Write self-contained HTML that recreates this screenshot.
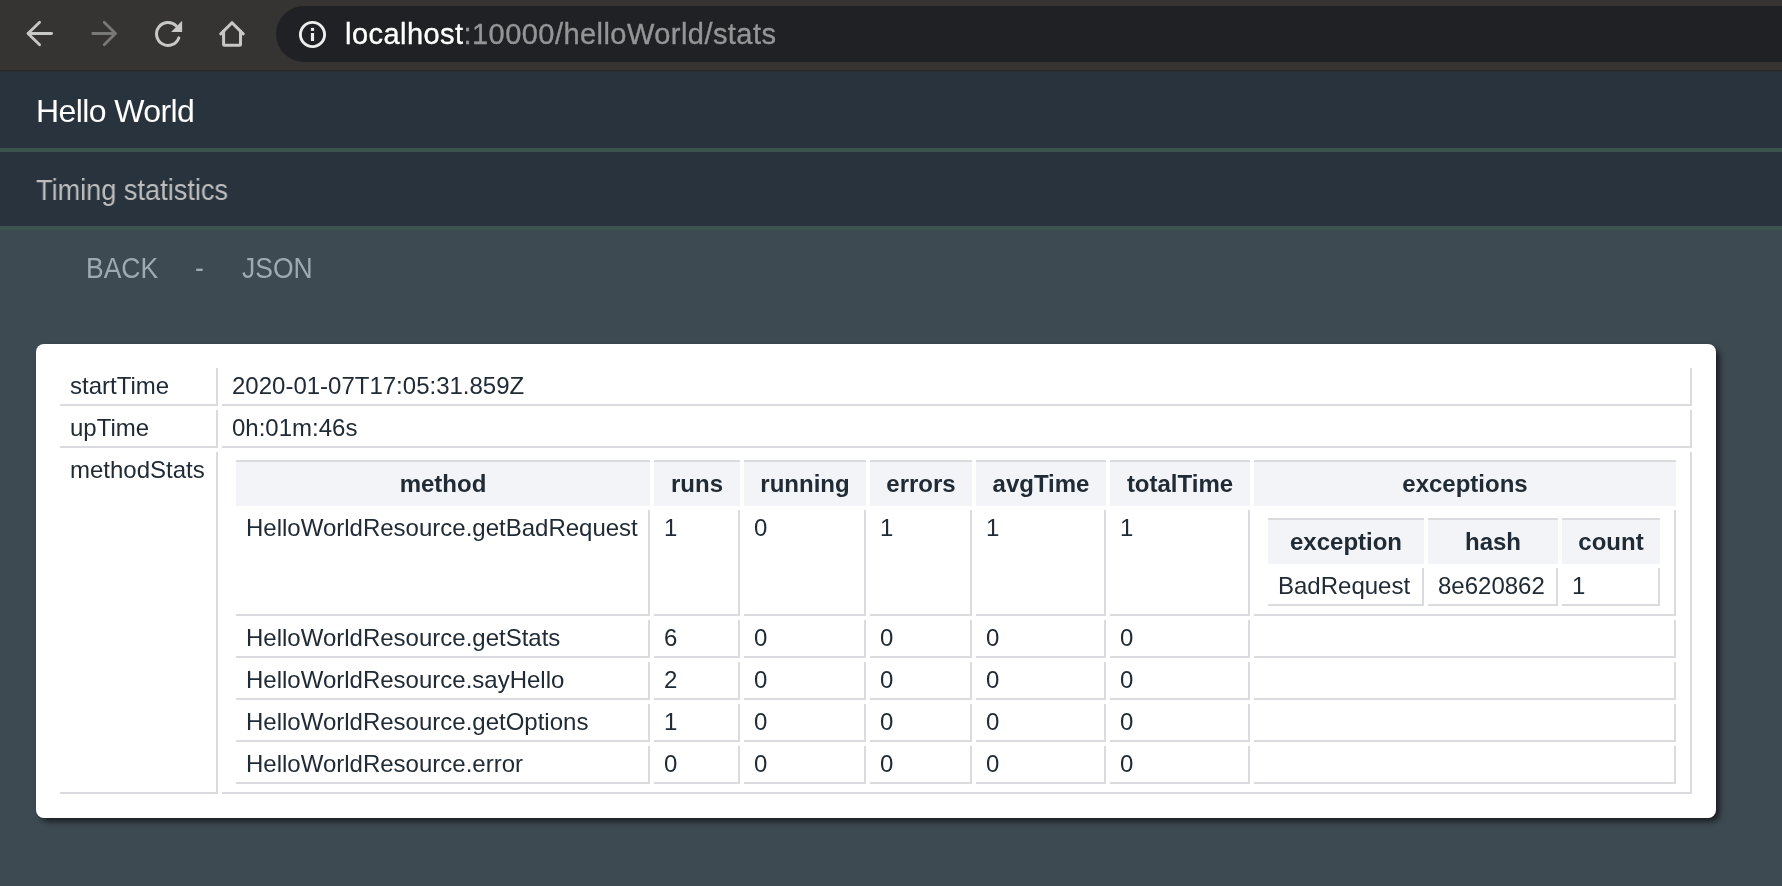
<!DOCTYPE html>
<html>
<head>
<meta charset="utf-8">
<style>
html,body{margin:0;padding:0;}
body{width:1782px;height:886px;overflow:hidden;background:#3e4a52;font-family:"Liberation Sans",sans-serif;position:relative;}
.toolbar{position:absolute;left:0;top:0;width:1782px;height:70px;background:#363432;}
.tbline{position:absolute;left:0;top:70px;width:1782px;height:2px;background:linear-gradient(#2a2928 0,#2a2928 1px,#2a2e32 1px,#2a2e32 2px);}
.url{position:absolute;left:276px;top:6px;width:1540px;height:56px;border-radius:28px;background:#202124;}
.urltext{position:absolute;left:345px;top:16px;-webkit-text-stroke:0.35px currentColor;font-size:29px;letter-spacing:0.45px;line-height:36px;color:#ffffff;white-space:nowrap;}
.urltext span{color:#959597;}
.icons{position:absolute;left:0;top:0;}
.hdr{position:absolute;left:0;top:72px;width:1782px;height:76px;background:#29333d;}
.hdr h1{position:absolute;left:35.5px;top:0;margin:0;font-weight:normal;font-size:32px;letter-spacing:-0.6px;line-height:36px;color:#ffffff;white-space:nowrap;}
.gl1{position:absolute;left:0;top:148px;width:1782px;height:4px;background:#3b544d;}
.sub{position:absolute;left:0;top:152px;width:1782px;height:74px;background:#29333d;}
.sub h2{position:absolute;left:35.5px;top:0;margin:0;font-weight:normal;font-size:29.5px;letter-spacing:0;transform-origin:0 0;transform:scaleX(0.92);line-height:32px;color:#bdbdbd;white-space:nowrap;}
.gl2{position:absolute;left:0;top:226px;width:1782px;height:4px;background:#3b544d;}
.links{position:absolute;left:86px;top:252px;font-size:29px;line-height:32px;color:#9eaab2;white-space:nowrap;}
.lk{position:absolute;top:0;display:inline-block;transform-origin:0 0;transform:scaleX(0.913);}
.card{position:absolute;left:36px;top:344px;width:1680px;height:474px;background:#ffffff;border-radius:8px;box-shadow:4px 4px 7px -1px rgba(0,0,0,0.7);}
table{border-collapse:separate;border-spacing:4px;color:#202b36;font-size:24px;}
td{border-right:2px solid #d9dbde;border-bottom:2px solid #d9dbde;padding:4px 10px;line-height:28px;vertical-align:top;text-align:left;white-space:nowrap;}
th{border-top:2px solid #d9dbde;background:#f3f4f7;padding:8px 10px;line-height:28px;font-weight:bold;text-align:center;white-space:nowrap;}
.t1{position:absolute;left:20px;top:20px;width:1640px;}
.t2{width:1448px;}
.t3{width:400px;}
table{table-layout:fixed;}
td,th{box-sizing:border-box;}
.aa{will-change:transform;}
</style>
</head>
<body>
<div class="toolbar"></div>
<div class="tbline"></div>
<svg class="icons" width="340" height="70" viewBox="0 0 340 70">
  <g fill="none" stroke="#c8c8c8" stroke-width="2.8" stroke-linecap="round" stroke-linejoin="round">
    <path d="M51.6 33.5H28M39.6 22.2L28 33.5L39.6 44.8"/>
  </g>
  <g fill="none" stroke="#787878" stroke-width="2.8" stroke-linecap="round" stroke-linejoin="round">
    <path d="M92.7 33.5H115.5M104.2 22.2L115.5 33.5L104.2 44.8"/>
  </g>
  <g fill="none" stroke="#c8c8c8" stroke-width="3" stroke-linecap="round">
    <path d="M176.1 25.7A11.5 11.5 0 1 0 178.8 37.9"/>
  </g>
  <path d="M182.1 20.8V31.9H171.1Z" fill="#c8c8c8"/>
  <g fill="none" stroke="#c8c8c8" stroke-width="3" stroke-linecap="round" stroke-linejoin="round">
    <path d="M220.8 33.9L232 22.7L243.2 33.9"/>
    <path d="M223.6 31V44.3Q223.6 45.3 224.6 45.3H239.5Q240.5 45.3 240.5 44.3V31"/>
  </g>
</svg>
<div class="url"></div>
<svg class="icons" width="340" height="70" viewBox="0 0 340 70">
  <circle cx="312.5" cy="34.5" r="12.1" fill="none" stroke="#ededed" stroke-width="2.9"/>
  <rect x="310.9" y="27.9" width="3.2" height="3" fill="#ededed"/>
  <rect x="310.9" y="33" width="3.2" height="8" fill="#ededed"/>
</svg>
<div class="urltext aa">localhost<span>:10000/helloWorld/stats</span></div>
<div class="hdr"><h1 class="aa" style="top:21px">Hello World</h1></div>
<div class="gl1"></div>
<div class="sub"><h2 class="aa" style="top:22px">Timing statistics</h2></div>
<div class="gl2"></div>
<div class="links aa"><span class="lk" style="left:0">BACK</span><span class="lk" style="left:109px">-</span><span class="lk" style="left:156px">JSON</span></div>
<div class="card">
<table class="t1 aa"><colgroup><col style="width:158px"><col style="width:1470px"></colgroup>
<tr><td>startTime</td><td>2020-01-07T17:05:31.859Z</td></tr>
<tr><td>upTime</td><td>0h:01m:46s</td></tr>
<tr><td>methodStats</td><td><table class="t2"><colgroup><col style="width:414px"><col style="width:86px"><col style="width:122px"><col style="width:102px"><col style="width:130px"><col style="width:140px"><col style="width:422px"></colgroup><tr><th>method</th><th>runs</th><th>running</th><th>errors</th><th>avgTime</th><th>totalTime</th><th>exceptions</th></tr><tr><td>HelloWorldResource.getBadRequest</td><td>1</td><td>0</td><td>1</td><td>1</td><td>1</td><td><table class="t3"><colgroup><col style="width:156px"><col style="width:130px"><col style="width:98px"></colgroup><tr><th>exception</th><th>hash</th><th>count</th></tr><tr><td>BadRequest</td><td>8e620862</td><td>1</td></tr></table></td></tr>
<tr><td>HelloWorldResource.getStats</td><td>6</td><td>0</td><td>0</td><td>0</td><td>0</td><td></td></tr>
<tr><td>HelloWorldResource.sayHello</td><td>2</td><td>0</td><td>0</td><td>0</td><td>0</td><td></td></tr>
<tr><td>HelloWorldResource.getOptions</td><td>1</td><td>0</td><td>0</td><td>0</td><td>0</td><td></td></tr>
<tr><td>HelloWorldResource.error</td><td>0</td><td>0</td><td>0</td><td>0</td><td>0</td><td></td></tr>
</table></td></tr>
</table>
</div>
</body>
</html>
